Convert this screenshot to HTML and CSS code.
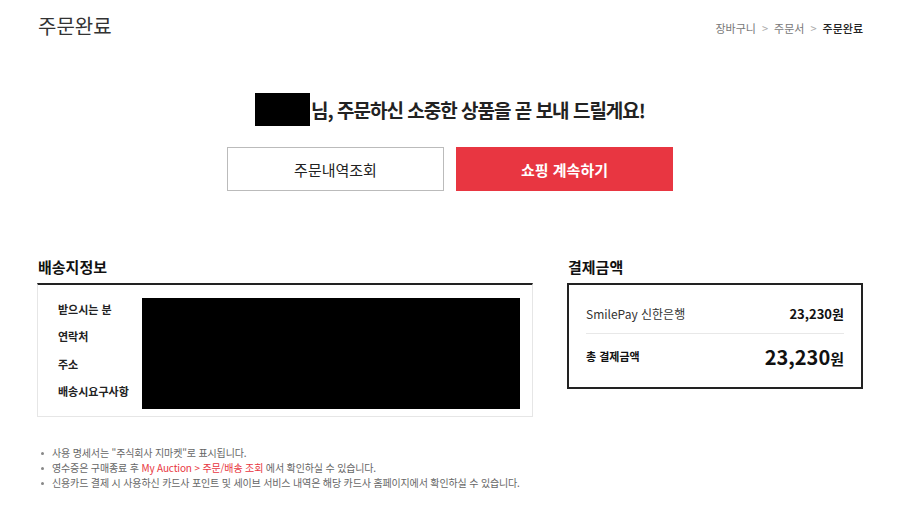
FILE: index.html
```html
<!DOCTYPE html>
<html lang="ko">
<head>
    <meta charset="UTF-8">
    <meta name="viewport" content="width=device-width, initial-scale=1.0">
    <title>주문완료</title>
    <link rel="stylesheet" href="styles.css">
</head>
<body>

    <header class="page-header">
        <h1>주문완료</h1>
        <ol class="breadcrumb">
            <li>장바구니</li>
            <li class="sep">&gt;</li>
            <li>주문서</li>
            <li class="sep">&gt;</li>
            <li class="current">주문완료</li>
        </ol>
    </header>

    <!-- 완료 메시지 -->
    <section class="complete">
        <p class="complete-msg"><span class="masked-name"></span>님, 주문하신 소중한 상품을 곧 보내 드릴게요!</p>
        <div class="btn-group">
            <a class="btn btn-line" href="#">주문내역조회</a>
            <a class="btn btn-red" href="#">쇼핑 계속하기</a>
        </div>
    </section>

    <div class="info-wrap">
        <!-- 배송지정보 -->
        <section class="delivery">
            <h2>배송지정보</h2>
            <div class="delivery-box">
                <ul class="delivery-labels">
                    <li>받으시는 분</li>
                    <li>연락처</li>
                    <li>주소</li>
                    <li>배송시요구사항</li>
                </ul>
                <div class="masked-block"></div>
            </div>
        </section>

        <!-- 결제금액 -->
        <section class="payment">
            <h2>결제금액</h2>
            <div class="payment-box">
                <div class="pay-row">
                    <span>SmilePay 신한은행</span>
                    <strong>23,230원</strong>
                </div>
                <div class="pay-row total">
                    <span>총 결제금액</span>
                    <strong><em>23,230</em>원</strong>
                </div>
            </div>
        </section>
    </div>

    <ul class="notice">
        <li>사용 명세서는 "주식회사 지마켓"로 표시됩니다.</li>
        <li>영수증은 구매종료 후 <span class="point">My Auction &gt; 주문/배송 조회</span> 에서 확인하실 수 있습니다.</li>
        <li>신용카드 결제 시 사용하신 카드사 포인트 및 세이브 서비스 내역은 해당 카드사 홈페이지에서 확인하실 수 있습니다.</li>
    </ul>

</body>
</html>
```

FILE: styles.css
```css
body {
    margin: 0;
    padding: 0 37px;
    font-family: "Noto Sans CJK KR", "Noto Sans", sans-serif;
    color: #222;
    background-color: #fff;
}

ul, ol {
    margin: 0;
    padding: 0;
    list-style: none;
}

/* 상단 타이틀 */
.page-header {
    display: flex;
    justify-content: space-between;
    align-items: center;
    height: 52px;
}

.page-header h1 {
    margin: 0 0 2px 1px;
    font-size: 20px;
    font-weight: normal;
    color: #333;
}

.breadcrumb {
    display: flex;
    align-items: center;
    gap: 6px;
    margin-top: 3px;
    font-size: 11px;
    color: #777;
}

.breadcrumb .sep {
    color: #aaa;
    font-size: 11px;
}

.breadcrumb .current {
    color: #222;
    font-weight: 500;
}

/* 완료 메시지 */
.complete {
    padding-top: 41px;
    text-align: center;
}

.complete-msg {
    display: flex;
    justify-content: center;
    align-items: center;
    margin: 0;
    font-size: 19px;
    font-weight: bold;
    letter-spacing: -1px;
    color: #222;
}

.masked-name {
    display: inline-block;
    width: 55px;
    height: 33px;
    margin-right: 1px;
    background-color: #000;
}

.btn-group {
    display: flex;
    justify-content: center;
    gap: 12px;
    margin-top: 21px;
}

.btn {
    display: flex;
    justify-content: center;
    align-items: center;
    box-sizing: border-box;
    width: 217px;
    height: 44px;
    font-size: 15px;
    text-decoration: none;
}

.btn-line {
    border: 1px solid #bbb;
    color: #222;
}

.btn-red {
    background-color: #e83641;
    color: #fff;
    font-weight: bold;
}

/* 배송지 / 결제 */
.info-wrap {
    display: flex;
    justify-content: space-between;
    margin-top: 64px;
}

.info-wrap h2 {
    margin: 0 0 4px 1px;
    font-size: 15px;
    font-weight: bold;
    color: #111;
    line-height: 24px;
}

.delivery {
    width: 496px;
}

.delivery-box {
    display: flex;
    box-sizing: border-box;
    height: 134px;
    padding: 13px 12px 7px 20px;
    border: 1px solid #e6e6e6;
    border-top: 2px solid #222;
}

.delivery-labels {
    width: 84px;
    padding-top: 2px;
    font-size: 11px;
    font-weight: bold;
    color: #222;
}

.delivery-labels li {
    height: 27.3px;
    line-height: 18px;
}

.masked-block {
    flex: 1;
    background-color: #000;
}

.payment {
    width: 296px;
}

.payment-box {
    box-sizing: border-box;
    height: 106px;
    padding: 8px 17px 0;
    border: 2px solid #222;
}

.pay-row {
    display: flex;
    justify-content: space-between;
    align-items: center;
    height: 40px;
    font-size: 12px;
    color: #333;
}

.pay-row strong {
    font-size: 13px;
    color: #111;
}

.pay-row.total {
    height: 44px;
    border-top: 1px solid #e8e8e8;
}

.pay-row.total span {
    font-size: 11px;
    font-weight: bold;
    color: #111;
}

.pay-row.total strong {
    font-size: 15px;
}

.pay-row.total em {
    font-style: normal;
    font-size: 20px;
}

/* 안내 */
.notice {
    margin-top: 28px;
    padding-left: 4px;
    font-size: 10px;
    letter-spacing: -0.15px;
    color: #666;
}

.notice li {
    position: relative;
    padding-left: 11px;
    line-height: 15px;
}

.notice li::before {
    content: "";
    position: absolute;
    left: 0;
    top: 7px;
    width: 3px;
    height: 3px;
    border-radius: 50%;
    background-color: #888;
}

.notice .point {
    color: #e83641;
}
```
